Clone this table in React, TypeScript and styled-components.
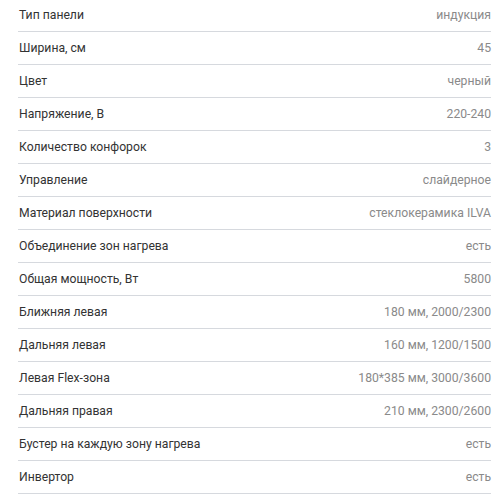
import React from "react";
import styled, { createGlobalStyle } from "styled-components";

const Global = createGlobalStyle`
  html, body { margin: 0; padding: 0; background: #ffffff; }
  body { font-family: Roboto, "Noto Sans", sans-serif; }
`;

const List = styled.dl`
  margin: -1px 8px 0 18px;
  padding: 0;
`;

const Row = styled.div`
  display: flex;
  align-items: center;
  justify-content: space-between;
  height: 32px;
  border-bottom: 1px solid #d6d9de;
  font-size: 12.2px;
`;

const Label = styled.dt`
  margin: 0 0 0 1px;
  color: #333333;
`;

const Value = styled.dd`
  margin: 0;
  color: #8a8a8a;
  text-align: right;
`;

const specs: [string, string][] = [
  ["Тип панели", "индукция"],
  ["Ширина, см", "45"],
  ["Цвет", "черный"],
  ["Напряжение, В", "220-240"],
  ["Количество конфорок", "3"],
  ["Управление", "слайдерное"],
  ["Материал поверхности", "стеклокерамика ILVA"],
  ["Объединение зон нагрева", "есть"],
  ["Общая мощность, Вт", "5800"],
  ["Ближняя левая", "180 мм, 2000/2300"],
  ["Дальняя левая", "160 мм, 1200/1500"],
  ["Левая Flex-зона", "180*385 мм, 3000/3600"],
  ["Дальняя правая", "210 мм, 2300/2600"],
  ["Бустер на каждую зону нагрева", "есть"],
  ["Инвертор", "есть"],
];

export default function App() {
  return (
    <>
      <Global />
      <List>
        {specs.map(([k, v]) => (
          <Row key={k}>
            <Label>{k}</Label>
            <Value>{v}</Value>
          </Row>
        ))}
      </List>
    </>
  );
}
